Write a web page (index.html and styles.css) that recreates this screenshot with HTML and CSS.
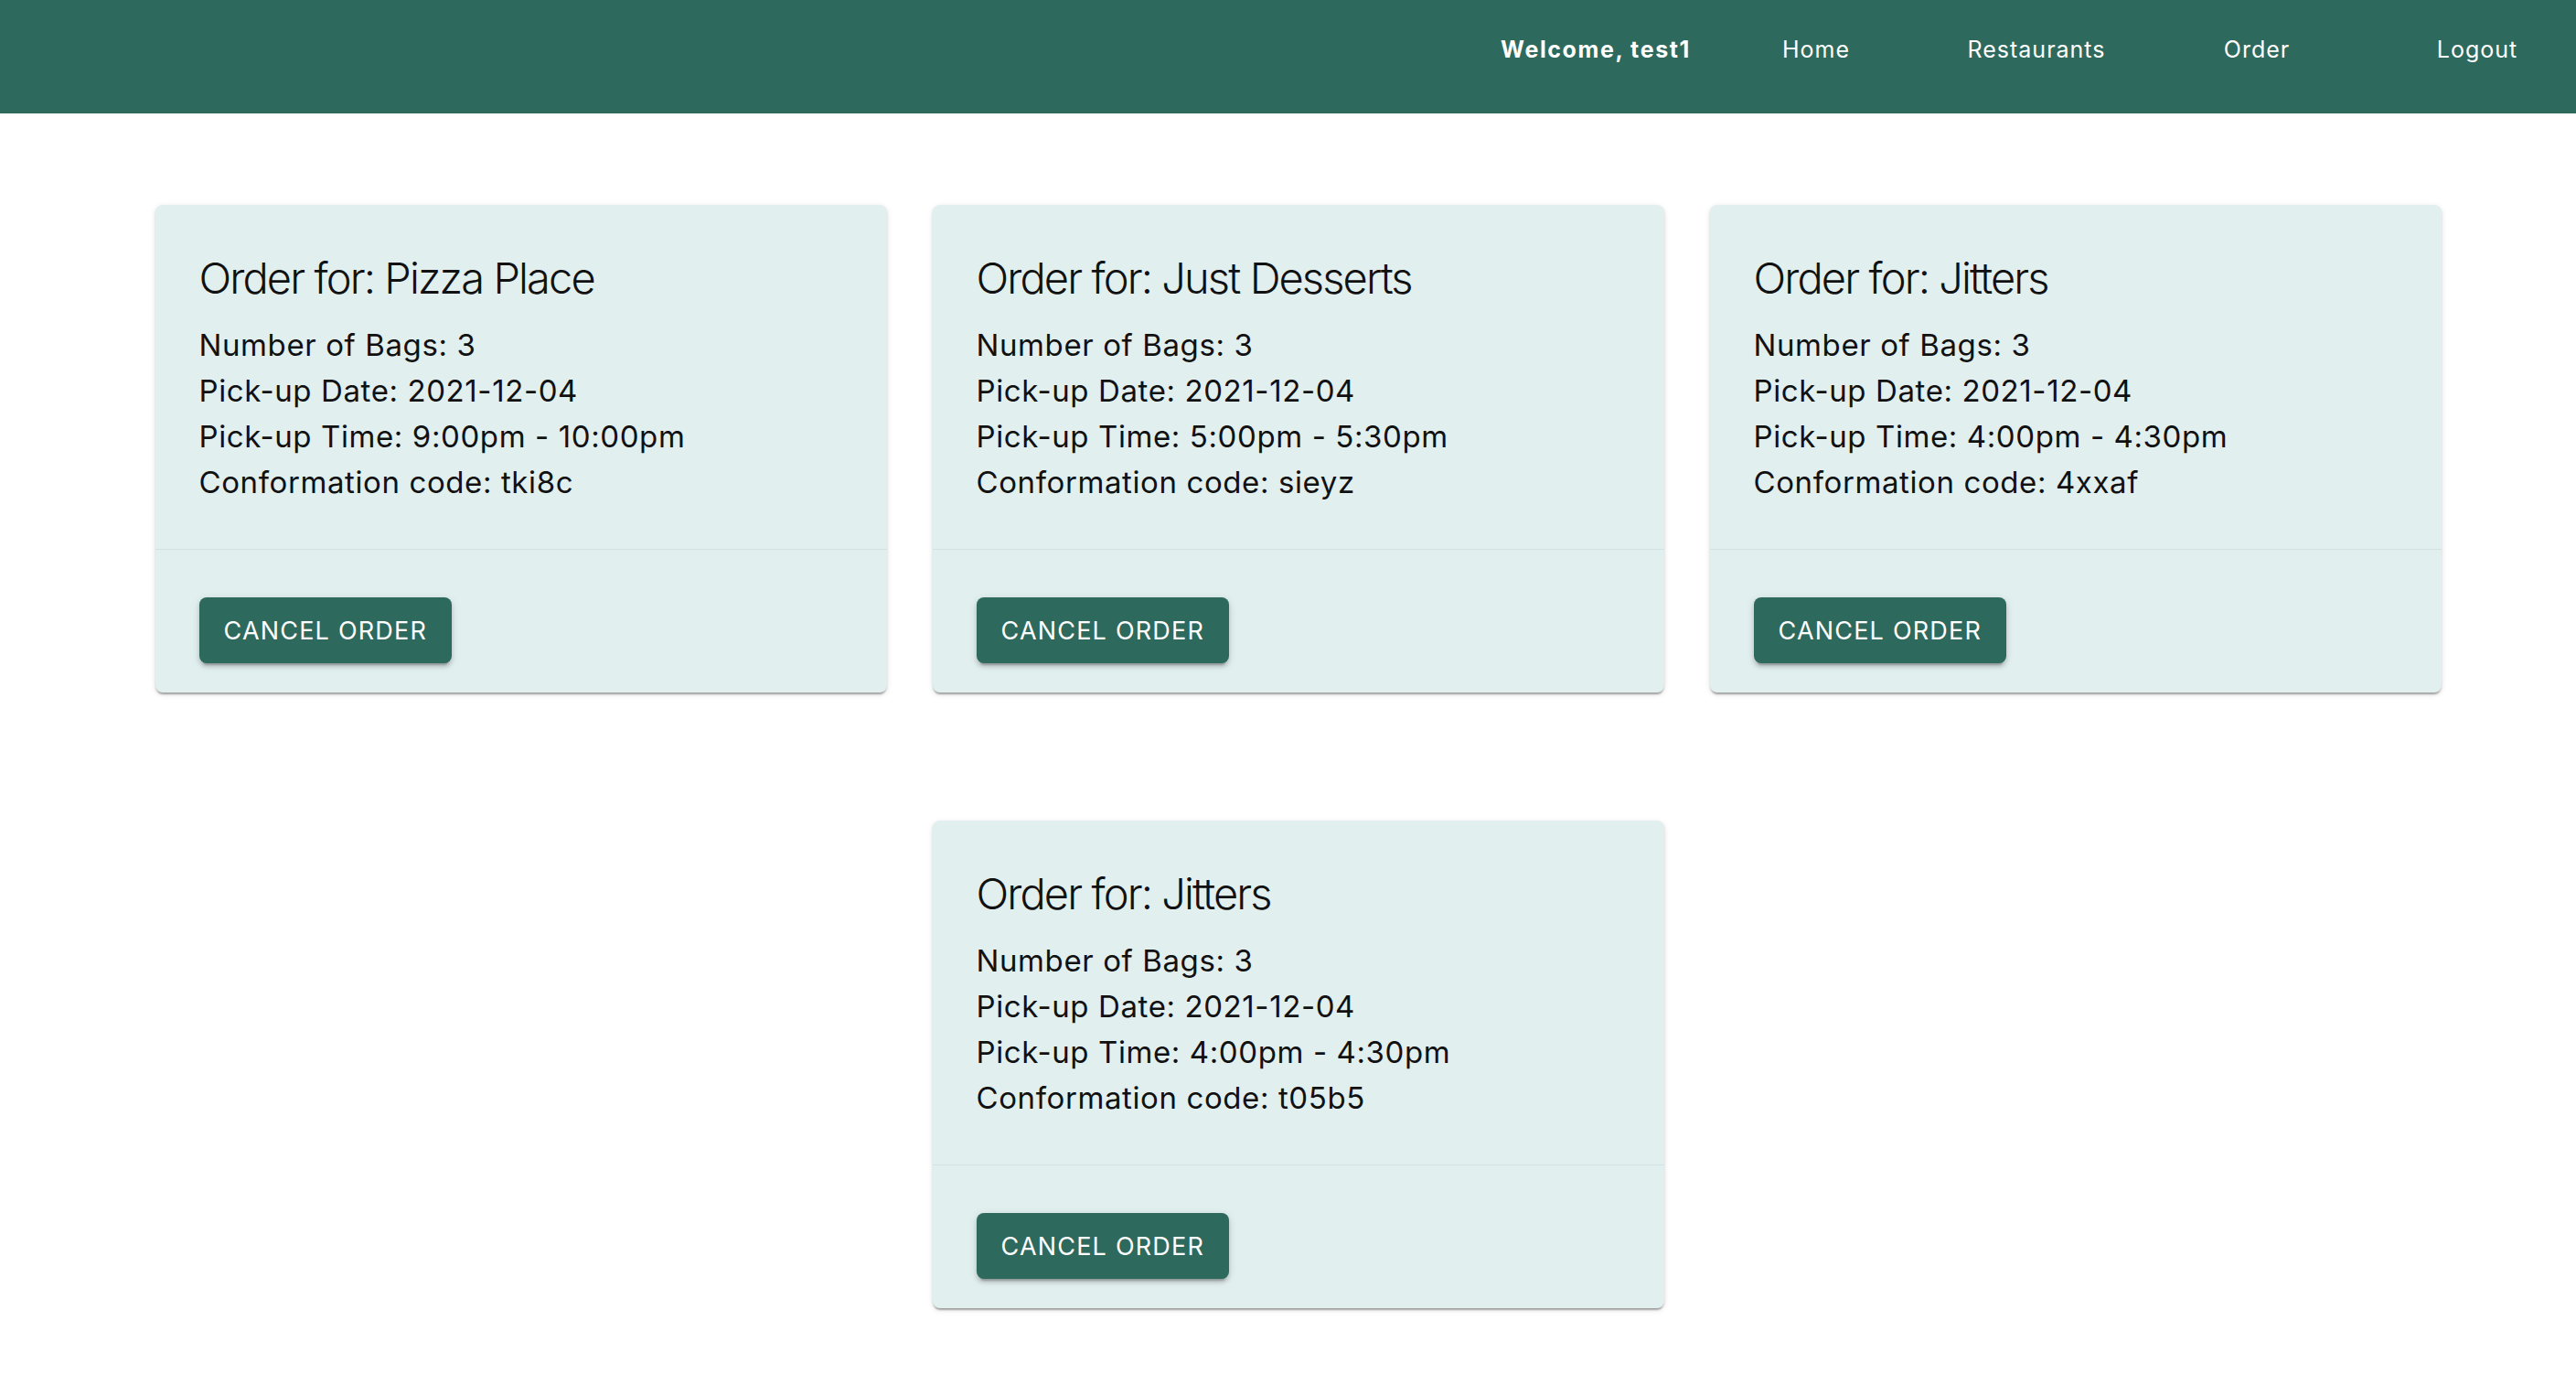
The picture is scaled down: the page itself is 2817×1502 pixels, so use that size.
FILE: index.html
```html
<!DOCTYPE html>
<html lang="en">
<head>
<meta charset="utf-8">
<title>Orders</title>
<link rel="stylesheet" href="styles.css">
</head>
<body>
<header class="topbar">
  <nav class="nav">
    <span class="nav-item nav-welcome">Welcome, test1</span>
    <a class="nav-item" href="#">Home</a>
    <a class="nav-item" href="#">Restaurants</a>
    <a class="nav-item" href="#">Order</a>
    <a class="nav-item" href="#">Logout</a>
  </nav>
</header>
<main class="orders">
  <div class="card">
    <div class="card-content">
      <h2 class="card-title">Order for: Pizza Place</h2>
      <p class="card-line">Number of Bags: 3</p>
      <p class="card-line">Pick-up Date: 2021-12-04</p>
      <p class="card-line">Pick-up Time: 9:00pm - 10:00pm</p>
      <p class="card-line">Conformation code: tki8c</p>
    </div>
    <div class="card-actions"><button class="btn">Cancel Order</button></div>
  </div>
  <div class="card">
    <div class="card-content">
      <h2 class="card-title">Order for: Just Desserts</h2>
      <p class="card-line">Number of Bags: 3</p>
      <p class="card-line">Pick-up Date: 2021-12-04</p>
      <p class="card-line">Pick-up Time: 5:00pm - 5:30pm</p>
      <p class="card-line">Conformation code: sieyz</p>
    </div>
    <div class="card-actions"><button class="btn">Cancel Order</button></div>
  </div>
  <div class="card">
    <div class="card-content">
      <h2 class="card-title">Order for: Jitters</h2>
      <p class="card-line">Number of Bags: 3</p>
      <p class="card-line">Pick-up Date: 2021-12-04</p>
      <p class="card-line">Pick-up Time: 4:00pm - 4:30pm</p>
      <p class="card-line">Conformation code: 4xxaf</p>
    </div>
    <div class="card-actions"><button class="btn">Cancel Order</button></div>
  </div>
  <div class="card">
    <div class="card-content">
      <h2 class="card-title">Order for: Jitters</h2>
      <p class="card-line">Number of Bags: 3</p>
      <p class="card-line">Pick-up Date: 2021-12-04</p>
      <p class="card-line">Pick-up Time: 4:00pm - 4:30pm</p>
      <p class="card-line">Conformation code: t05b5</p>
    </div>
    <div class="card-actions"><button class="btn">Cancel Order</button></div>
  </div>
</main>
</body>
</html>
```
FILE: styles.css
```css
* { box-sizing: border-box; }

html, body {
  margin: 0;
  padding: 0;
  background: #ffffff;
  font-family: Inter, "Noto Sans", "Liberation Sans", sans-serif;
  color: #111111;
}

.topbar {
  height: 124px;
  background: #2d695d;
  display: flex;
  justify-content: flex-end;
  align-items: flex-start;
  padding-top: 38px;
}

.nav {
  display: flex;
  gap: 25px;
}

.nav-item {
  width: 216px;
  text-align: center;
  color: #ffffff;
  text-decoration: none;
  font-size: 25px;
  line-height: 32px;
  font-weight: 400;
  letter-spacing: 1px;
  white-space: nowrap;
}

.nav-welcome {
  font-weight: 700;
  letter-spacing: 1.6px;
}

.orders {
  display: flex;
  flex-wrap: wrap;
  justify-content: center;
  column-gap: 50px;
  row-gap: 140px;
  padding: 100px 147px 60px 169px;
}

.card {
  width: 800px;
  background: #e2efef;
  border-radius: 8px;
  box-shadow: 0 4px 2px -2px rgba(0,0,0,0.2), 0 2px 2px 0 rgba(0,0,0,0.14), 0 2px 6px 0 rgba(0,0,0,0.12);
  overflow: hidden;
}

.card-content {
  padding: 48px;
  border-bottom: 1px solid #d2e1e1;
}

.card-title {
  margin: 0 0 16px;
  font-size: 47px;
  line-height: 64px;
  font-weight: 300;
  letter-spacing: -1.9px;
}

.card-line {
  margin: 0;
  font-size: 33px;
  line-height: 50px;
  font-weight: 400;
  letter-spacing: 0.6px;
}

.card-actions {
  padding: 52px 48px 32px;
  display: flex;
}

.btn {
  height: 72px;
  padding: 0 27px;
  border: none;
  border-radius: 8px;
  background: #2d695d;
  color: #ffffff;
  font-family: Inter, "Noto Sans", "Liberation Sans", sans-serif;
  font-size: 27px;
  font-weight: 400;
  letter-spacing: 1.2px;
  text-transform: uppercase;
  box-shadow: 0 6px 2px -4px rgba(0,0,0,0.2), 0 4px 4px 0 rgba(0,0,0,0.14), 0 2px 10px 0 rgba(0,0,0,0.12);
  cursor: pointer;
}
```
